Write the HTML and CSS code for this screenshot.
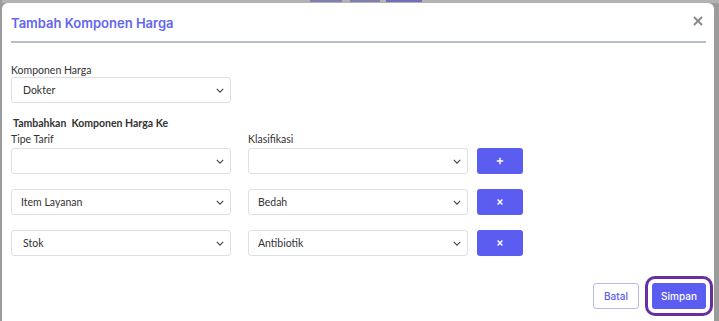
FILE: index.html
```html
<!DOCTYPE html>
<html lang="id">
<head>
    <meta charset="UTF-8">
    <meta name="viewport" content="width=device-width, initial-scale=1.0">
    <title>Tambah Komponen Harga</title>
    <link rel="stylesheet" href="styles.css">
</head>
<body>
    <div class="backdrop">
        <div class="page-strip">
            <span class="seg seg-1"></span>
            <span class="seg seg-2"></span>
            <span class="seg seg-3"></span>
        </div>

        <div class="modal">
            <div class="modal-header">
                <h2 class="modal-title">Tambah Komponen Harga</h2>
                <button class="btn-close">
                    <svg viewBox="0 0 10 10"><path d="M1 1l8 8M9 1l-8 8" stroke="#8a8a8a" stroke-width="2"/></svg>
                </button>
            </div>

            <div class="modal-body">
                <div class="field">
                    <label class="label">Komponen Harga</label>
                    <div class="select">
                        <span class="select-text indent">Dokter</span>
                        <svg class="chevron" viewBox="0 0 10 6"><path d="M1 1l4 4 4-4" fill="none" stroke="#444" stroke-width="1.4"/></svg>
                    </div>
                </div>

                <p class="section-title">Tambahkan&nbsp; Komponen Harga Ke</p>

                <div class="row row-labels">
                    <label class="label col">Tipe Tarif</label>
                    <label class="label col">Klasifikasi</label>
                </div>

                <div class="row">
                    <div class="select col">
                        <span class="select-text"></span>
                        <svg class="chevron" viewBox="0 0 10 6"><path d="M1 1l4 4 4-4" fill="none" stroke="#444" stroke-width="1.4"/></svg>
                    </div>
                    <div class="select col">
                        <span class="select-text"></span>
                        <svg class="chevron" viewBox="0 0 10 6"><path d="M1 1l4 4 4-4" fill="none" stroke="#444" stroke-width="1.4"/></svg>
                    </div>
                    <button class="btn-icon">
                        <svg viewBox="0 0 10 10"><path d="M5 1v8M1 5h8" stroke="#fff" stroke-width="1.8"/></svg>
                    </button>
                </div>

                <div class="row">
                    <div class="select col">
                        <span class="select-text">Item Layanan</span>
                        <svg class="chevron" viewBox="0 0 10 6"><path d="M1 1l4 4 4-4" fill="none" stroke="#444" stroke-width="1.4"/></svg>
                    </div>
                    <div class="select col">
                        <span class="select-text">Bedah</span>
                        <svg class="chevron" viewBox="0 0 10 6"><path d="M1 1l4 4 4-4" fill="none" stroke="#444" stroke-width="1.4"/></svg>
                    </div>
                    <button class="btn-icon">
                        <svg viewBox="0 0 10 10"><path d="M2 2l6 6M8 2l-6 6" stroke="#fff" stroke-width="1.8"/></svg>
                    </button>
                </div>

                <div class="row">
                    <div class="select col">
                        <span class="select-text indent">Stok</span>
                        <svg class="chevron" viewBox="0 0 10 6"><path d="M1 1l4 4 4-4" fill="none" stroke="#444" stroke-width="1.4"/></svg>
                    </div>
                    <div class="select col">
                        <span class="select-text">Antibiotik</span>
                        <svg class="chevron" viewBox="0 0 10 6"><path d="M1 1l4 4 4-4" fill="none" stroke="#444" stroke-width="1.4"/></svg>
                    </div>
                    <button class="btn-icon">
                        <svg viewBox="0 0 10 10"><path d="M2 2l6 6M8 2l-6 6" stroke="#fff" stroke-width="1.8"/></svg>
                    </button>
                </div>
            </div>

            <div class="modal-footer">
                <button class="btn btn-outline">Batal</button>
                <button class="btn btn-primary">Simpan</button>
            </div>
        </div>
    </div>
</body>
</html>
```

FILE: styles.css
```css
:root {
    --primary: #5b5cf0;
    --title: #6366f1;
    --border: #dcdfe4;
    --text: #333;
    --ring: #6a2ea0;
}

* {
    margin: 0;
    padding: 0;
    box-sizing: border-box;
}

body {
    background: #9c9c9c;
    font-family: 'Lato', sans-serif;
    width: 719px;
    height: 321px;
    overflow: hidden;
}

.backdrop {
    padding-left: 2px;
}

.page-strip {
    height: 3px;
    display: flex;
    background: #b3b3b3;
}

.seg {
    height: 2px;
    background: #7f80b0;
}

.seg-1 { margin-left: 308px; width: 32px; }
.seg-2 { margin-left: 8px; width: 30px; }
.seg-3 { margin-left: 6px; width: 36px; background: #6e70b8; }

.modal {
    width: 712px;
    height: 318px;
    background: #fff;
    border-radius: 6px 6px 0 0;
    padding: 0 8px 0 9px;
    display: flex;
    flex-direction: column;
}

.modal-header {
    display: flex;
    justify-content: space-between;
    align-items: center;
    height: 40px;
    padding-top: 1px;
    border-bottom: 2px solid #b6bec9;
}

.modal-title {
    font-family: 'Inter', sans-serif;
    font-size: 13px;
    font-weight: 600;
    color: var(--title);
}

.btn-close {
    background: none;
    border: none;
    width: 10px;
    height: 10px;
    margin: 0 3px 4px 0;
    display: flex;
    cursor: pointer;
}

.btn-close svg {
    width: 10px;
    height: 10px;
}

.modal-body {
    padding-top: 21px;
    flex: 1;
}

.label {
    display: block;
    font-size: 10.5px;
    color: var(--text);
    line-height: 12px;
    margin-bottom: 1px;
}

.select {
    width: 220px;
    height: 26px;
    border: 1px solid var(--border);
    border-radius: 3px;
    display: flex;
    align-items: center;
    justify-content: space-between;
    padding: 0 6px 0 9px;
    background: #fff;
}

.select-text {
    font-size: 10.5px;
    color: var(--text);
}

.select-text.indent {
    padding-left: 2px;
}

.chevron {
    width: 8px;
    height: 5px;
}

.section-title {
    font-size: 10.5px;
    font-weight: 700;
    color: var(--text);
    margin: 14px 0 4px 2px;
    line-height: 12px;
}

.row {
    display: flex;
    align-items: center;
    margin-bottom: 15px;
}

.row-labels {
    margin-bottom: 2px;
}

.col {
    width: 220px;
}

.col + .col {
    margin-left: 17px;
}

.btn-icon {
    width: 46px;
    height: 26px;
    margin-left: 9px;
    background: var(--primary);
    border: none;
    border-radius: 3px;
    display: flex;
    align-items: center;
    justify-content: center;
    cursor: pointer;
}

.btn-icon svg {
    width: 8px;
    height: 8px;
}

.modal-footer {
    display: flex;
    justify-content: flex-end;
    gap: 13px;
    padding: 0 0 12px;
}

.btn {
    height: 26px;
    border-radius: 3px;
    font-family: 'Inter', sans-serif;
    font-size: 10px;
    font-weight: 500;
    cursor: pointer;
}

.btn-outline {
    width: 46px;
    background: #fff;
    border: 1px solid #b9b8f5;
    color: var(--primary);
}

.btn-primary {
    width: 54px;
    background: var(--primary);
    border: none;
    color: #fff;
    outline: 3px solid var(--ring);
    outline-offset: 4px;
}
```
